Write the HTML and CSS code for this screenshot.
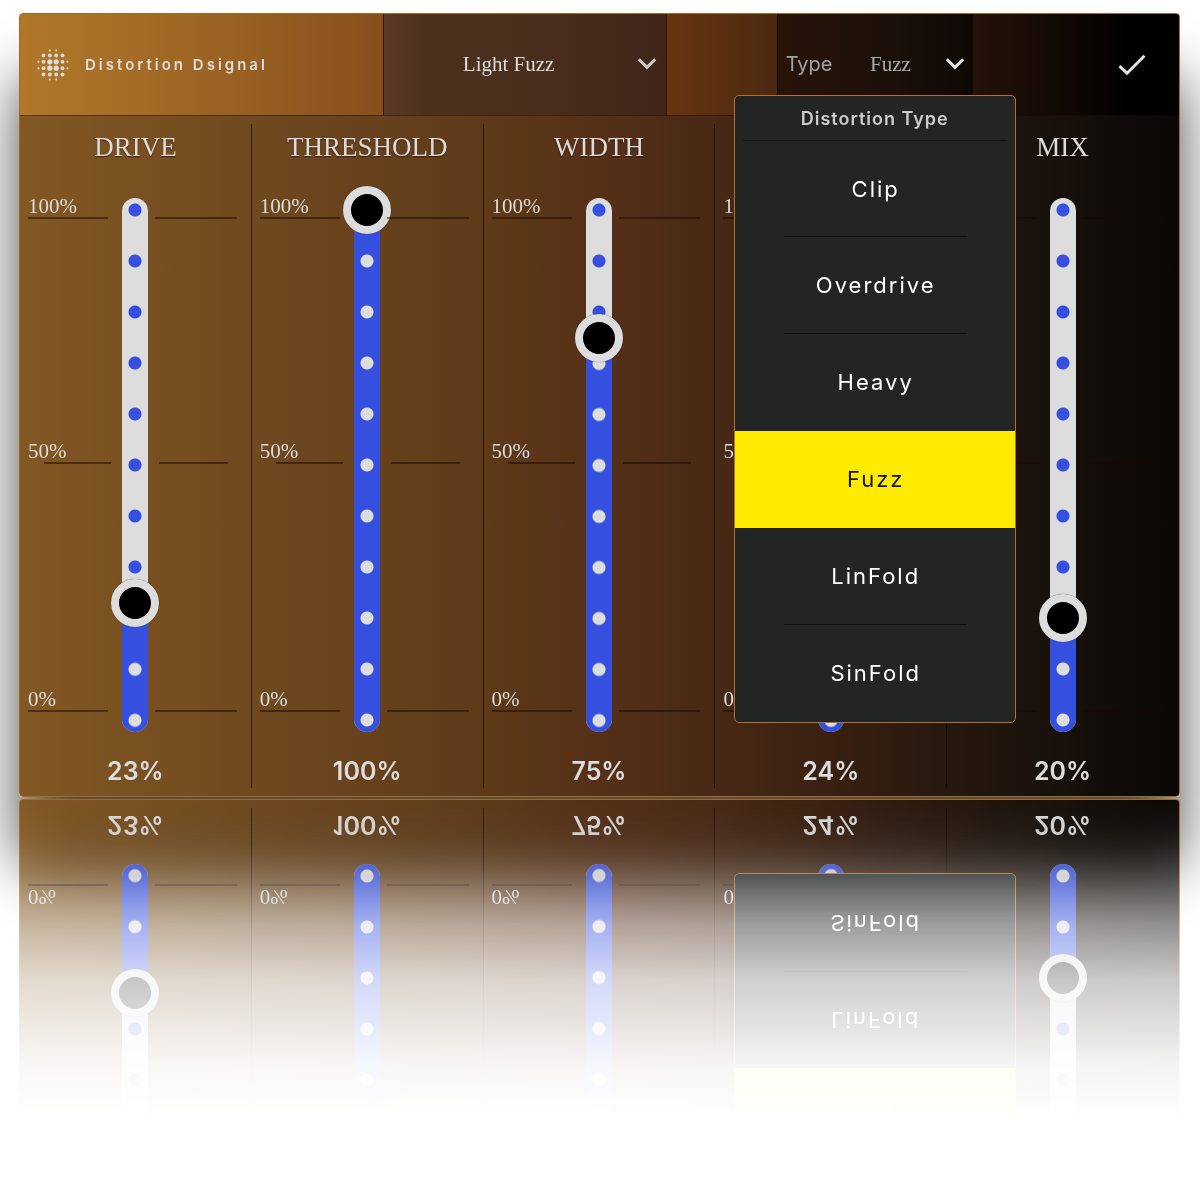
FILE: index.html
```html
<!DOCTYPE html>
<html lang="en">
<head>
<meta charset="utf-8">
<meta name="viewport" content="width=device-width, initial-scale=1">
<title>Distortion Dsignal</title>
<link rel="stylesheet" href="styles.css">
</head>
<body>
<main class="stage">
  <div class="shadow">
    <section class="panel">
      <header class="bar">
        <div class="brand">
          <svg class="logo" width="32" height="32" viewBox="0 0 32 32" fill="currentColor" aria-hidden="true">
            <g><circle cx="12.8" cy="1.5" r="1"/><circle cx="19.2" cy="1.5" r="1"/><circle cx="12.8" cy="30.5" r="1"/><circle cx="19.2" cy="30.5" r="1"/><circle cx="1.5" cy="12.8" r="1"/><circle cx="1.5" cy="19.2" r="1"/><circle cx="30.5" cy="12.8" r="1"/><circle cx="30.5" cy="19.2" r="1"/></g>
            <g><circle cx="6.5" cy="6.5" r="1.9"/><circle cx="12.8" cy="6.5" r="1.9"/><circle cx="19.2" cy="6.5" r="1.9"/><circle cx="25.5" cy="6.5" r="1.9"/><circle cx="6.5" cy="12.8" r="1.9"/><circle cx="25.5" cy="12.8" r="1.9"/><circle cx="6.5" cy="19.2" r="1.9"/><circle cx="25.5" cy="19.2" r="1.9"/><circle cx="6.5" cy="25.5" r="1.9"/><circle cx="12.8" cy="25.5" r="1.9"/><circle cx="19.2" cy="25.5" r="1.9"/><circle cx="25.5" cy="25.5" r="1.9"/></g>
            <g><circle cx="12.8" cy="12.8" r="2.6"/><circle cx="19.2" cy="12.8" r="2.6"/><circle cx="12.8" cy="19.2" r="2.6"/><circle cx="19.2" cy="19.2" r="2.6"/></g>
          </svg>
          <h1 class="name">Distortion Dsignal</h1>
        </div>
        <div class="preset">
          <select class="pick pick-preset" aria-label="Preset"><option>Light Fuzz</option></select>
          <svg class="chevron" width="20" height="14" viewBox="0 0 20 14" aria-hidden="true"><path d="M1.8 2.2 10 10.4 18.2 2.2"/></svg>
        </div>
        <div class="spacer"></div>
        <div class="type">
          <label class="type-label" for="type">Type</label>
          <select class="pick pick-type" id="type"><option>Fuzz</option></select>
          <svg class="chevron chevron-lit" width="20" height="14" viewBox="0 0 20 14" aria-hidden="true"><path d="M1.8 2.2 10 10.4 18.2 2.2"/></svg>
          <div class="menu">
            <h2 class="menu-title">Distortion Type</h2>
            <button class="item" type="button">Clip</button>
            <button class="item" type="button">Overdrive</button>
            <button class="item item-plain" type="button">Heavy</button>
            <button class="item item-on" type="button">Fuzz</button>
            <button class="item" type="button">LinFold</button>
            <button class="item item-plain" type="button">SinFold</button>
          </div>
        </div>
        <div class="spacer"></div>
        <button class="done" type="button" aria-label="Done">
          <svg width="28" height="22" viewBox="0 0 28 22" aria-hidden="true"><path d="M1.5 12.2 9 19.2 26.5 1.8"/></svg>
        </button>
      </header>

      <div class="controls">
        <div class="control">
          <label class="title" for="drive">DRIVE</label>
          <div class="fader">
            <div class="scale"><span class="tick">100%</span><span class="tick tick-mid">50%</span><span class="tick">0%</span></div>
            <div class="track" style="--v:.23"><div class="fill"></div><input class="range" id="drive" type="range" value="23"></div>
            <div class="scale scale-right"><span class="tick"></span><span class="tick tick-mid"></span><span class="tick"></span></div>
          </div>
          <output class="value" for="drive">23%</output>
        </div>
        <div class="control">
          <label class="title" for="threshold">THRESHOLD</label>
          <div class="fader">
            <div class="scale"><span class="tick">100%</span><span class="tick tick-mid">50%</span><span class="tick">0%</span></div>
            <div class="track" style="--v:1"><div class="fill"></div><input class="range" id="threshold" type="range" value="100"></div>
            <div class="scale scale-right"><span class="tick"></span><span class="tick tick-mid"></span><span class="tick"></span></div>
          </div>
          <output class="value" for="threshold">100%</output>
        </div>
        <div class="control">
          <label class="title" for="width">WIDTH</label>
          <div class="fader">
            <div class="scale"><span class="tick">100%</span><span class="tick tick-mid">50%</span><span class="tick">0%</span></div>
            <div class="track" style="--v:.75"><div class="fill"></div><input class="range" id="width" type="range" value="75"></div>
            <div class="scale scale-right"><span class="tick"></span><span class="tick tick-mid"></span><span class="tick"></span></div>
          </div>
          <output class="value" for="width">75%</output>
        </div>
        <div class="control">
          <div class="title"></div>
          <div class="fader">
            <div class="scale"><span class="tick">100%</span><span class="tick tick-mid">50%</span><span class="tick">0%</span></div>
            <div class="track" style="--v:.24"><div class="fill"></div><input class="range" id="tone" type="range" value="24" aria-label="Tone"></div>
            <div class="scale scale-right"><span class="tick"></span><span class="tick tick-mid"></span><span class="tick"></span></div>
          </div>
          <output class="value" for="tone">24%</output>
        </div>
        <div class="control">
          <label class="title" for="mix">MIX</label>
          <div class="fader">
            <div class="scale"><span class="tick"></span><span class="tick tick-mid"></span><span class="tick"></span></div>
            <div class="track" style="--v:.2"><div class="fill"></div><input class="range" id="mix" type="range" value="20"></div>
            <div class="scale scale-right"><span class="tick"></span><span class="tick tick-mid"></span><span class="tick"></span></div>
          </div>
          <output class="value" for="mix">20%</output>
        </div>
      </div>
    </section>
  </div>
</main>
</body>
</html>
```

FILE: styles.css
```css
* { box-sizing: border-box; }

body {
  margin: 0;
  background: #fff;
  color: #ddd;
  font-family: Inter, "Liberation Sans", sans-serif;
  overflow-x: hidden;
}

.stage { padding: 13px 20px 400px 19px; }

.shadow {
  border-radius: 4px;
  box-shadow: 0 66px 60px rgba(0, 0, 0, .7);
}

.panel {
  border: 1px solid #a8691f;
  border-radius: 4px;
  background: linear-gradient(90deg, #825823, #6f491f 20%, #5e3a19 40%, #553017 50%, #482915 60%, #392011 70%, #26180e 80%, #17100b 90%, #0a0705);
  -webkit-box-reflect: below 2px linear-gradient(to top, #000, rgba(0, 0, 0, .88) 40px, rgba(0, 0, 0, .68) 80px, rgba(0, 0, 0, .45) 124px, rgba(0, 0, 0, .22) 180px, rgba(0, 0, 0, .04) 270px, transparent 320px);
}

/* Header */

.bar {
  display: grid;
  grid-template-columns: 364fr 284fr 110fr 197fr 110fr 96fr;
  height: 102px;
  border-bottom: 1px solid rgba(30, 12, 0, .6);
  border-radius: 3px 3px 0 0;
  background: linear-gradient(90deg, #b1782a, #9b6323 17%, #87501b 31%, #68340f 56%, #4b2a11 65%, #2b1408 80%, #190c06 87%, #000 96%);
}

.brand {
  display: flex;
  align-items: center;
  gap: 16px;
  padding-left: 17px;
}

.name {
  margin: 0;
  font-size: 15px;
  font-weight: 600;
  letter-spacing: 3px;
}

.preset,
.type {
  position: relative;
  display: flex;
  align-items: center;
  padding-bottom: 2px;
  border-left: 1px solid rgba(20, 8, 0, .6);
}

.preset {
  border-right: 1px solid rgba(20, 8, 0, .6);
  background: linear-gradient(90deg, #5a3a26, #4c321d 14%, #4a2f1d 50%, #3f2619);
  padding-right: 9px;
}

.type {
  background: linear-gradient(90deg, #281308, #1b100a 60%, #0e0805);
  padding-right: 8px;
  padding-left: 8px;
}

.pick {
  flex: 1;
  appearance: none;
  border: 0;
  padding: 0;
  background: none;
  color: #ddd;
  font: 21px/32px "Liberation Serif", serif;
  text-align-last: center;
}

.pick-preset { padding-right: 4px; }
.pick-type { padding-left: 3px; color: #aaa; }

.type-label { color: #a3a3a3; font-size: 20px; }

.chevron { fill: none; stroke: #ccc; stroke-width: 3; }
.chevron-lit { stroke: #e6e6e6; }

.done {
  border: 0;
  border-left: 1px solid rgba(0, 0, 0, .5);
  padding: 3px 0 0;
  background: none;
}

.done svg { fill: none; stroke: #e2e2e2; stroke-width: 3; }

/* Type menu */

.menu {
  position: absolute;
  z-index: 2;
  top: 81px;
  left: -44px;
  width: 282px;
  border: 1px solid #b3722a;
  border-radius: 5px;
  background: #232525;
}

.menu-title {
  margin: 0 8px;
  padding-top: 1px;
  border-bottom: 1px solid #181213;
  color: #ccc;
  font-size: 18px;
  font-weight: 600;
  letter-spacing: 1px;
  line-height: 43px;
  text-align: center;
}

.item {
  display: grid;
  grid-template-rows: 1fr 1px;
  justify-items: center;
  align-items: center;
  width: 100%;
  height: 97px;
  border: 0;
  padding: 0 0 0 2px;
  background: none;
  color: #fff;
  font: 22px Inter, "Liberation Sans", sans-serif;
  letter-spacing: 2px;
}

.item:first-of-type { height: 96px; }

.item::after {
  content: "";
  width: 66%;
  height: 1px;
  background: #0f0f0f;
}

.item-plain::after,
.item-on::after { background: none; }

.item-on { background: #ffeb00; color: #111; }

/* Faders */

.controls {
  display: grid;
  grid-template-columns: repeat(5, 1fr);
  padding: 8px 0;
}

.control {
  display: flex;
  flex-direction: column;
  align-items: center;
  border-right: 1px solid rgba(20, 8, 0, .65);
  color: #ddd;
}

.control:last-child { border-right-color: transparent; }

.title {
  height: 46px;
  font: 27px/46px "Liberation Serif", serif;
  text-shadow: 0 1px 1px rgba(40, 0, 0, .7);
}

.fader {
  display: grid;
  grid-template-columns: 1fr 26px 1fr;
  align-self: stretch;
  margin-top: 28px;
}

.scale {
  display: grid;
  grid-template-rows: 21px 245px 248px;
  align-content: start;
  align-items: end;
  padding: 0 14px 0 8px;
}

.scale-right { padding: 0 14px 0 7px; }

.tick {
  display: flex;
  flex-direction: column;
  font: 21px/22px "Liberation Serif", serif;
}

.tick::after {
  content: "";
  height: 2px;
  background: rgba(25, 5, 0, .5);
}

.tick-mid::after { margin: 0 -3px 0 16px; }
.scale-right .tick-mid::after { margin: 0 9px 0 4px; }

/* Dots sit 51px apart, the first and last 12px from the ends */
.track {
  display: grid;
  height: 534px;
  border-radius: 13px;
  background: radial-gradient(circle at 13px 12px, #354fdf 6px, transparent 7px) 0 0 / 26px 51px, #ddd;
}

.fill,
.range { grid-area: 1 / 1; }

.fill {
  align-self: end;
  height: calc(12px + 510px * var(--v));
  border-radius: 0 0 13px 13px;
  background: radial-gradient(circle at 13px 39px, #ddd 6px, transparent 7px) 0 100% / 26px 51px, #354fdf;
}

.range {
  appearance: none;
  writing-mode: vertical-lr;
  direction: rtl;
  width: 48px;
  height: 558px;
  margin: -12px -11px;
  background: none;
}

.range::-webkit-slider-thumb {
  appearance: none;
  width: 48px;
  height: 48px;
  border: 8px solid #ddd;
  border-radius: 50%;
  background: #000;
  box-shadow: 0 0 1px rgba(0, 0, 0, .7);
}

.value {
  margin-top: 23px;
  padding-bottom: 1px;
  font-size: 25px;
  font-weight: 600;
  line-height: 32px;
}
```
